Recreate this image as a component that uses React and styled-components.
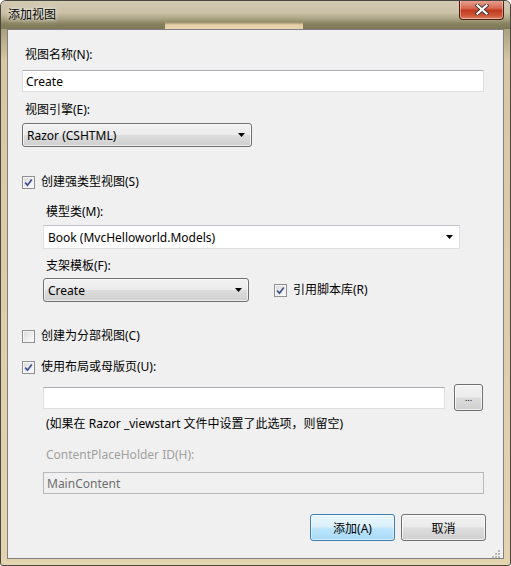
import React from 'react'
import styled, { createGlobalStyle } from 'styled-components'

const Global = createGlobalStyle`
html, body {
  margin: 0;
  padding: 0;
  background: #ffffff;
}
body {
  font-family: "Noto Sans", "Noto Sans CJK SC", sans-serif;
  font-size: 12px;
  color: #000;
}
`

const Window = styled.div`
width: 511px;
height: 566px;
box-sizing: border-box;
display: flex;
flex-direction: column;
border: 1px solid #4a4740;
border-radius: 6px 6px 3px 3px;
background: linear-gradient(to bottom, #b3ab94 0px, #c6bea7 14px, #a9a27f 28px, #d8c7a2 60px, #e4d3af 100%);
box-shadow: inset 0 1px 0 rgba(255,255,255,0.8);
overflow: hidden;
`

const TitleBar = styled.div`
height: 28px;
display: flex;
justify-content: space-between;
align-items: flex-start;
padding: 0 6px 0 7px;
background:
  linear-gradient(to bottom, rgba(236,214,176,0) 0%, #e6cfa8 40%, #ead5b0 100%) 164px 21px / 138px 7px no-repeat,
  linear-gradient(to bottom, #d3cab3 0px, #c9c0a5 12px, #a9a282 18px, #86805e 23px, #7d7856 28px);
`

const Title = styled.div`
margin-top: 5px;
line-height: 18px;
font-size: 12px;
text-shadow: 0 0 6px rgba(255,255,255,0.9), 0 0 3px rgba(255,255,255,0.7);
`

const CloseButton = styled.div`
width: 45px;
height: 20px;
margin-top: -1px;
box-sizing: border-box;
display: flex;
align-items: center;
justify-content: center;
border: 1px solid #4d2319;
border-top: none;
border-radius: 0 0 4px 4px;
background: linear-gradient(to bottom, #e9a797 0%, #d86a52 42%, #c23b20 55%, #cf5a3c 85%, #e08a6a 100%);
box-shadow: inset 0 0 0 1px rgba(255,255,255,0.35);
`

const Panel = styled.div`
flex: 1;
position: relative;
margin: 0 6px 6px;
border: 1px solid #808080;
background: #f0f0f0;
padding: 16px 17px 0 14px;
display: flex;
flex-direction: column;
align-items: flex-start;
`

const Label = styled.div`
line-height: 18px;
padding-left: 3px;
margin-top: ${p => p.$mt || 0}px;
color: ${p => (p.$disabled ? '#a0a0a0' : '#000')};
white-space: nowrap;
`

const TextBox = styled.div`
box-sizing: border-box;
width: ${p => p.$w}px;
height: 22px;
margin-top: ${p => p.$mt || 0}px;
padding: 0 3px;
display: flex;
align-items: center;
border: 1px solid ${p => (p.$disabled ? '#b5b9bc' : '#dde0e3')};
border-top-color: ${p => (p.$disabled ? '#b5b9bc' : '#abadb3')};
background: ${p => (p.$disabled ? '#f0f0f0' : '#ffffff')};
color: ${p => (p.$disabled ? '#6d6d6d' : '#000')};
`

const Combo = styled.div`
box-sizing: border-box;
width: ${p => p.$w}px;
height: 24px;
margin-top: ${p => p.$mt || 0}px;
padding: 0 6px 0 4px;
display: flex;
align-items: center;
justify-content: space-between;
border: 1px solid ${p => (p.$list ? '#dde0e3' : '#707070')};
border-top-color: ${p => (p.$list ? '#c4c6cb' : '#707070')};
border-radius: ${p => (p.$list ? 0 : 3)}px;
background: ${p =>
  p.$list
    ? '#ffffff'
    : 'linear-gradient(to bottom, #f2f2f2 0%, #ebebeb 48%, #dddddd 52%, #cfcfcf 100%)'};
box-shadow: ${p => (p.$list ? 'none' : 'inset 0 0 0 1px rgba(255,255,255,0.6)')};
`

const Indent = styled.div`
display: flex;
flex-direction: column;
align-items: flex-start;
padding-left: 21px;
`

const Row = styled.div`
display: flex;
align-items: center;
margin-top: ${p => p.$mt || 0}px;
gap: ${p => p.$gap || 0}px;
`

const CheckRow = styled.div`
display: flex;
align-items: center;
gap: 6px;
height: 18px;
line-height: 18px;
margin-top: ${p => p.$mt || 0}px;
margin-left: ${p => p.$ml || 0}px;
white-space: nowrap;
`

const Box = styled.div`
width: 13px;
height: 13px;
box-sizing: border-box;
border: 1px solid #8e8f8f;
background: linear-gradient(135deg, #d8d8d8 0%, #f0f0f0 60%, #fbfbfb 100%);
box-shadow: inset 0 0 0 1px #f6f6f6;
display: flex;
align-items: center;
justify-content: center;
`

const Button = styled.div`
box-sizing: border-box;
width: ${p => p.$w}px;
height: 27px;
display: flex;
align-items: center;
justify-content: center;
border: 1px solid ${p => (p.$primary ? '#3c7fb1' : '#707070')};
border-radius: 3px;
background: ${p =>
  p.$primary
    ? 'linear-gradient(to bottom, #eaf6fd 0%, #d9f0fc 48%, #bee6fd 52%, #a7d9f5 100%)'
    : 'linear-gradient(to bottom, #f2f2f2 0%, #ebebeb 48%, #dddddd 52%, #cfcfcf 100%)'};
box-shadow: inset 0 0 0 1px ${p => (p.$primary ? 'rgba(255,255,255,0.5)' : 'rgba(255,255,255,0.7)')};
font-size: 12px;
`

const Dots = styled.span`
font-size: 9px;
line-height: 9px;
`

const ButtonRow = styled.div`
align-self: flex-end;
display: flex;
gap: 6px;
margin-top: 20px;
`

const Grip = styled.div`
position: absolute;
right: 2px;
bottom: 2px;
width: 10px;
height: 10px;
`

const Arrow = () => (
  <svg width="7" height="4" viewBox="0 0 7 4">
    <polygon points="0,0 7,0 3.5,4" fill="#000" />
  </svg>
)

const Check = ({ checked }) => (
  <Box>
    {checked && (
      <svg width="9" height="9" viewBox="0 0 9 9">
        <path d="M1.2 4.6 L3.5 7.2 L7.8 1.4" fill="none" stroke="#3a4f8f" strokeWidth="1.7" />
      </svg>
    )}
  </Box>
)

export default function App() {
  return (
    <>
      <Global />
      <Window>
        <TitleBar>
          <Title>添加视图</Title>
          <CloseButton>
            <svg width="14" height="11" viewBox="0 0 14 11">
              <path d="M2.5 1.5 L11.5 9.5 M11.5 1.5 L2.5 9.5" stroke="#3b3b3b" strokeWidth="4" strokeLinecap="square" />
              <path d="M2.5 1.5 L11.5 9.5 M11.5 1.5 L2.5 9.5" stroke="#ffffff" strokeWidth="2.2" strokeLinecap="square" />
            </svg>
          </CloseButton>
        </TitleBar>
        <Panel>
          <Label>视图名称(N):</Label>
          <TextBox $w={462} $mt={6}>Create</TextBox>
          <Label $mt={9}>视图引擎(E):</Label>
          <Combo $w={230} $mt={4}>
            <span>Razor (CSHTML)</span>
            <Arrow />
          </Combo>
          <CheckRow $mt={26}>
            <Check checked />
            <span>创建强类型视图(S)</span>
          </CheckRow>
          <Indent>
            <Label $mt={12}>模型类(M):</Label>
            <Combo $list $w={417} $mt={4}>
              <span>Book (MvcHelloworld.Models)</span>
              <Arrow />
            </Combo>
            <Label $mt={8}>支架模板(F):</Label>
            <Row $mt={3}>
              <Combo $w={206}>
                <span>Create</span>
                <Arrow />
              </Combo>
              <CheckRow $ml={25}>
                <Check checked />
                <span>引用脚本库(R)</span>
              </CheckRow>
            </Row>
          </Indent>
          <CheckRow $mt={25}>
            <Check />
            <span>创建为分部视图(C)</span>
          </CheckRow>
          <CheckRow $mt={13}>
            <Check checked />
            <span>使用布局或母版页(U):</span>
          </CheckRow>
          <Indent>
            <Row $mt={8} $gap={9}>
              <TextBox $w={402} />
              <Button $w={29}>
                <Dots>...</Dots>
              </Button>
            </Row>
            <Label $mt={4}>(如果在 Razor _viewstart 文件中设置了此选项，则留空)</Label>
            <Label $mt={13} $disabled>ContentPlaceHolder ID(H):</Label>
            <TextBox $w={441} $mt={8} $disabled>MainContent</TextBox>
          </Indent>
          <ButtonRow>
            <Button $w={85} $primary>添加(A)</Button>
            <Button $w={85}>取消</Button>
          </ButtonRow>
          <Grip>
            <svg width="10" height="10" viewBox="0 0 10 10">
              {[[7, 1], [7, 4], [4, 4], [7, 7], [4, 7], [1, 7]].map(([x, y]) => (
                <rect key={`${x}-${y}`} x={x} y={y} width="2" height="2" fill="#b8b8b8" />
              ))}
            </svg>
          </Grip>
        </Panel>
      </Window>
    </>
  )
}
